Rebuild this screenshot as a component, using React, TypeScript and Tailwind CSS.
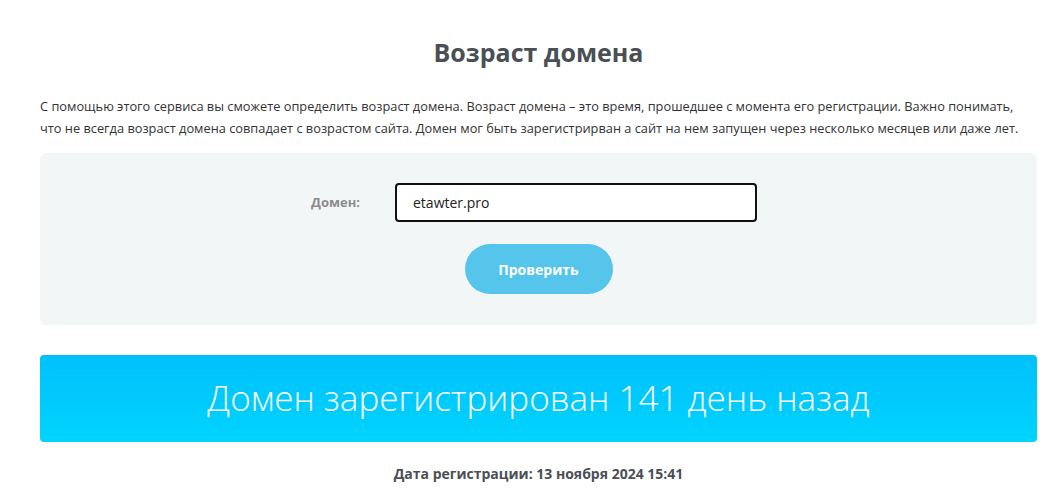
export default function App() {
  return (
    <div className="min-h-screen bg-white font-['Open_Sans',sans-serif] text-[#333]">
      <div className="ml-[40px] w-[997px] pt-[34px]">
        <h1 className="text-center text-[25px] font-bold leading-[36px] text-[#4a4f55]">
          Возраст домена
        </h1>

        <p className="mt-[25px] text-[12.8px] leading-[22px] text-[#333]">
          С помощью этого сервиса вы сможете определить возраст домена. Возраст домена – это время, прошедшее с момента его регистрации. Важно понимать,
          <br />
          что не всегда возраст домена совпадает с возрастом сайта. Домен мог быть зарегистрирван а сайт на нем запущен через несколько месяцев или даже лет.
        </p>

        <div className="mt-[14px] flex h-[172px] flex-col items-center rounded-[6px] bg-[#f3f6f7] pt-[30px]">
          <div className="mr-[9px] flex items-center">
            <label className="w-[84px] text-[13px] font-bold text-[#8c8c8c]">Домен:</label>
            <input
              readOnly
              value="etawter.pro"
              className="h-[39px] w-[362px] rounded-[4px] border-2 border-[#111] bg-white px-[16px] text-[14px] text-[#222] outline-none"
            />
          </div>
          <button className="mt-[22px] h-[50px] w-[148px] rounded-full bg-[#56c5ec] text-[14px] font-bold text-white">
            Проверить
          </button>
        </div>

        <div className="mt-[30px] flex h-[87px] items-center justify-center rounded-[4px] bg-gradient-to-b from-[#00c0fc] to-[#00d4fd]">
          <span className="text-[35px] font-light text-white">Домен зарегистрирован 141 день назад</span>
        </div>

        <div className="mt-[21px] text-center text-[14px] font-bold text-[#4a4f55]">
          Дата регистрации: 13 ноября 2024 15:41
        </div>
      </div>
    </div>
  );
}
